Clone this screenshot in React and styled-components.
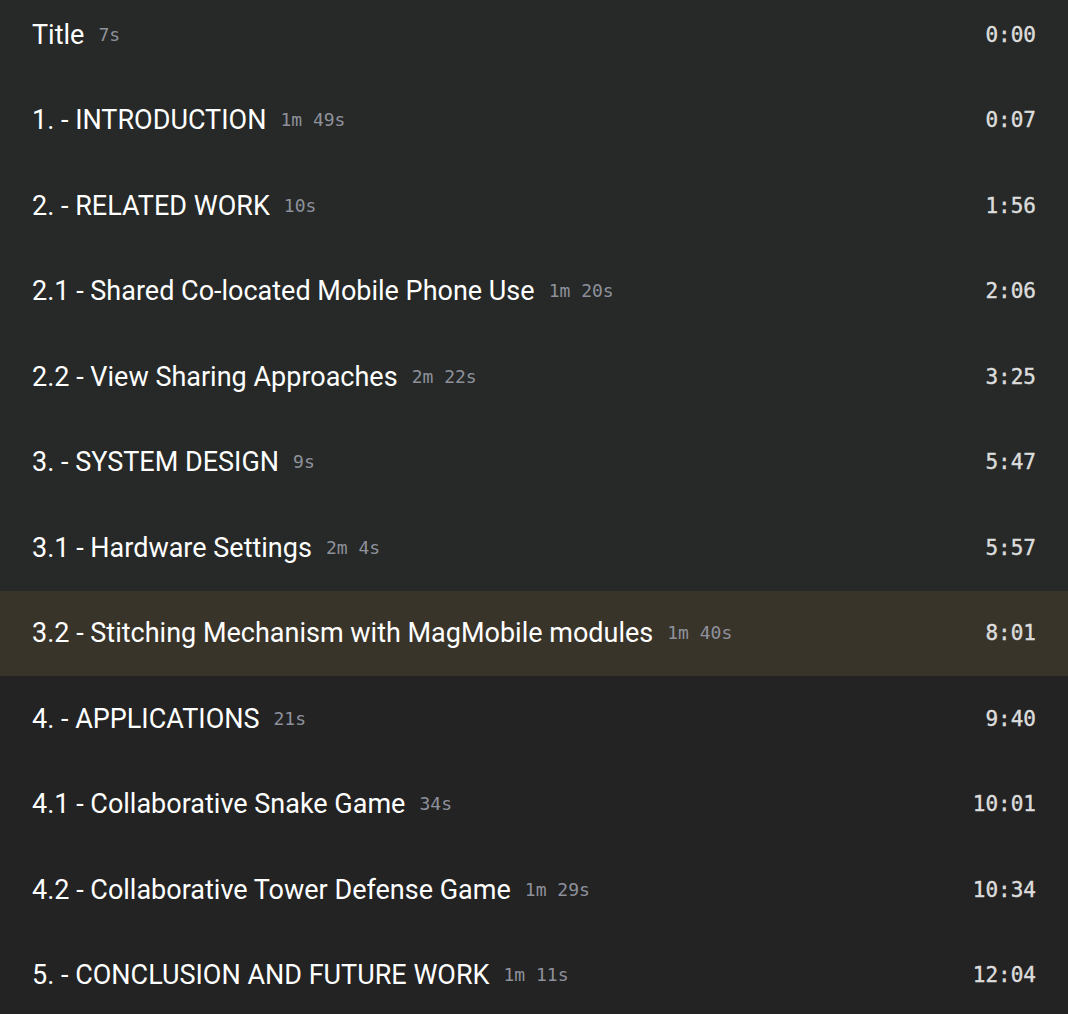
import React from 'react';
import styled, { createGlobalStyle } from 'styled-components';

const chapters = [
  { title: 'Title', dur: '7s', at: '0:00', part: 'top' },
  { title: '1. - INTRODUCTION', dur: '1m 49s', at: '0:07', part: 'top' },
  { title: '2. - RELATED WORK', dur: '10s', at: '1:56', part: 'top' },
  { title: '2.1 - Shared Co-located Mobile Phone Use', dur: '1m 20s', at: '2:06', part: 'top' },
  { title: '2.2 - View Sharing Approaches', dur: '2m 22s', at: '3:25', part: 'top' },
  { title: '3. - SYSTEM DESIGN', dur: '9s', at: '5:47', part: 'top' },
  { title: '3.1 - Hardware Settings', dur: '2m 4s', at: '5:57', part: 'top' },
  { title: '3.2 - Stitching Mechanism with MagMobile modules', dur: '1m 40s', at: '8:01', part: 'active' },
  { title: '4. - APPLICATIONS', dur: '21s', at: '9:40', part: 'rest' },
  { title: '4.1 - Collaborative Snake Game', dur: '34s', at: '10:01', part: 'rest' },
  { title: '4.2 - Collaborative Tower Defense Game', dur: '1m 29s', at: '10:34', part: 'rest' },
  { title: '5. - CONCLUSION AND FUTURE WORK', dur: '1m 11s', at: '12:04', part: 'rest' },
];

const GlobalStyle = createGlobalStyle`
  html, body {
    margin: 0;
    padding: 0;
    background: #232323;
    overflow: hidden;
  }
`;

const bg = {
  top: '#262927',
  active: '#39342a',
  rest: '#232323',
};

function App() {
  return (
    <>
      <GlobalStyle />
      <List>
        {chapters.map((c) => (
          <Row key={c.at} part={c.part}>
            <Label>
              <Name>{c.title}</Name>
              <Duration>{c.dur}</Duration>
            </Label>
            <Stamp>{c.at}</Stamp>
          </Row>
        ))}
      </List>
    </>
  );
}

const List = styled.div`
  display: flex;
  flex-direction: column;
  margin-top: -8px;
`;

const Row = styled.div`
  display: flex;
  flex-direction: row;
  align-items: center;
  justify-content: space-between;
  height: 85.5px;
  padding: 0 32px;
  background: ${(p) => bg[p.part]};
`;

const Label = styled.div`
  display: flex;
  flex-direction: row;
  align-items: center;
  gap: 14px;
`;

const Name = styled.span`
  font-family: Roboto, sans-serif;
  font-size: 27px;
  line-height: 32px;
  color: #ffffff;
`;

const Duration = styled.span`
  font-family: "DejaVu Sans Mono", monospace;
  font-size: 18px;
  line-height: 22px;
  color: #8e919c;
`;

const Stamp = styled.span`
  font-family: "DejaVu Sans Mono", monospace;
  font-size: 21px;
  font-weight: 400;
  color: #dcdcdc;
  -webkit-text-stroke: 0.4px #dcdcdc;
`;

export default App;
